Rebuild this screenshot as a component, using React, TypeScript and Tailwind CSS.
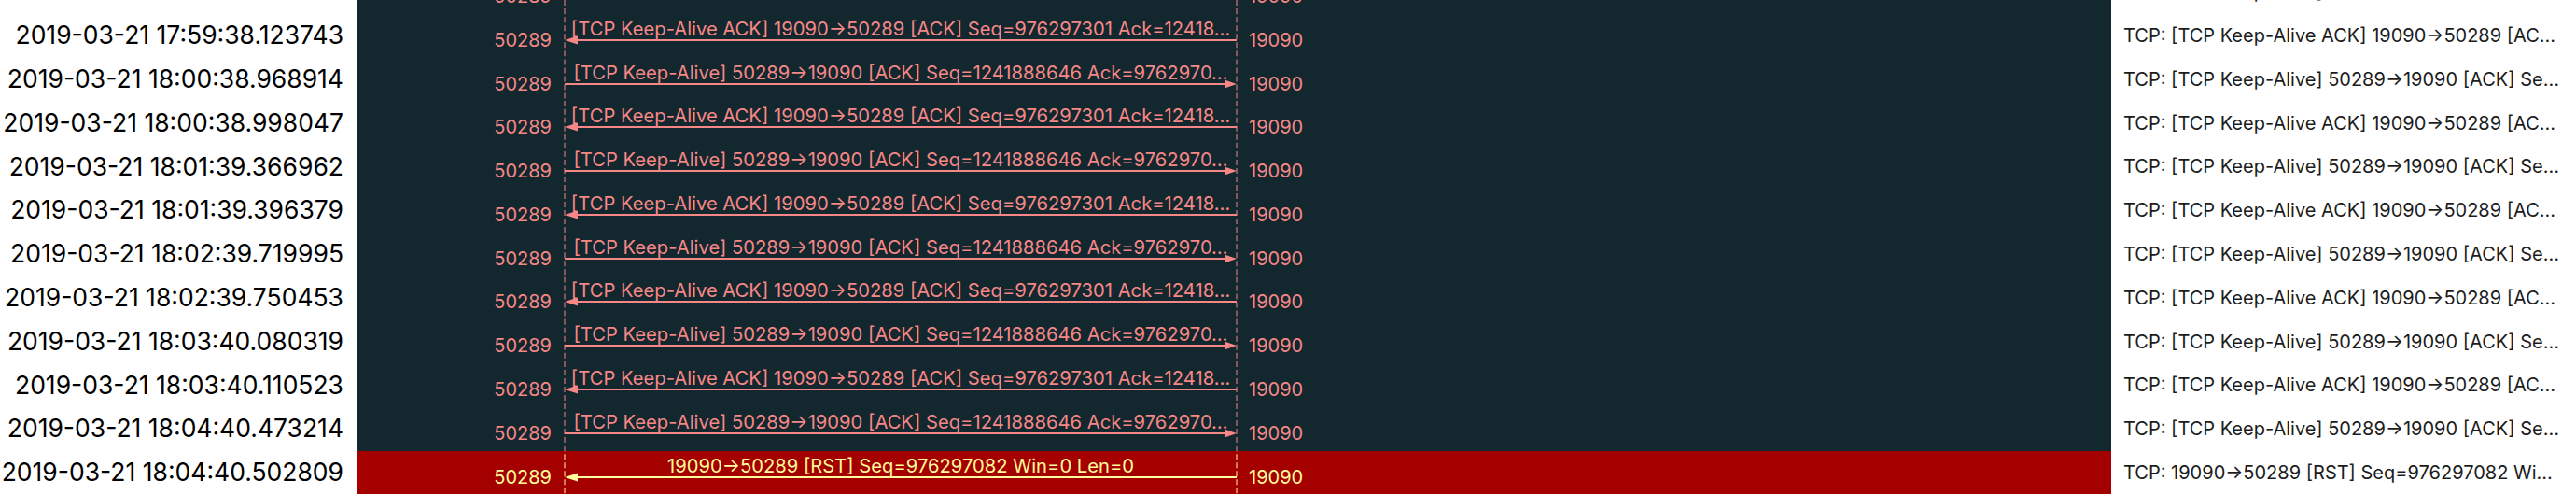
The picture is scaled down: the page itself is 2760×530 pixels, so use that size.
import React from "react";

type Kind = "ack" | "ka" | "rst";

const rows: { ts: string; kind: Kind }[] = [
  { ts: "", kind: "ka" },
  { ts: "2019-03-21 17:59:38.123743", kind: "ack" },
  { ts: "2019-03-21 18:00:38.968914", kind: "ka" },
  { ts: "2019-03-21 18:00:38.998047", kind: "ack" },
  { ts: "2019-03-21 18:01:39.366962", kind: "ka" },
  { ts: "2019-03-21 18:01:39.396379", kind: "ack" },
  { ts: "2019-03-21 18:02:39.719995", kind: "ka" },
  { ts: "2019-03-21 18:02:39.750453", kind: "ack" },
  { ts: "2019-03-21 18:03:40.080319", kind: "ka" },
  { ts: "2019-03-21 18:03:40.110523", kind: "ack" },
  { ts: "2019-03-21 18:04:40.473214", kind: "ka" },
  { ts: "2019-03-21 18:04:40.502809", kind: "rst" },
];

const label: Record<Kind, string> = {
  ack: "[TCP Keep-Alive ACK] 19090\u219250289 [ACK] Seq=976297301 Ack=12418\u2026",
  ka: "[TCP Keep-Alive] 50289\u219219090 [ACK] Seq=1241888646 Ack=9762970\u2026",
  rst: "19090\u219250289 [RST] Seq=976297082 Win=0 Len=0",
};

const info: Record<Kind, string> = {
  ack: "TCP: [TCP Keep-Alive ACK] 19090\u219250289 [AC\u2026",
  ka: "TCP: [TCP Keep-Alive] 50289\u219219090 [ACK] Se\u2026",
  rst: "TCP: 19090\u219250289 [RST] Seq=976297082 Wi\u2026",
};

const ROW_H = 46.8;
const TOP = -32.1;

function Lane({ kind, top }: { kind: Kind; top: number }) {
  const color = kind === "rst" ? "#fffc9c" : "#f78787";
  const phase = ((top % 9) + 9) % 9;
  const left = kind !== "ka";
  return (
    <div className="relative w-[722px] shrink-0 h-full">
      <svg className="absolute inset-0 h-full w-full overflow-hidden">
        <line x1="1" y1="0" x2="1" y2="48" stroke={color} strokeOpacity="0.5" strokeWidth="2" strokeDasharray="6 3" strokeDashoffset={phase} />
        <line x1="721" y1="0" x2="721" y2="48" stroke={color} strokeOpacity="0.5" strokeWidth="2" strokeDasharray="6 3" strokeDashoffset={phase} />
        {left ? (
          <>
            <line x1="12" y1="28" x2="721" y2="28" stroke={color} strokeWidth="2" />
            <polygon points="1,28 15,23.5 15,32.5" fill={color} />
          </>
        ) : (
          <>
            <line x1="1" y1="28" x2="710" y2="28" stroke={color} strokeWidth="2" />
            <polygon points="721,28 708,23.5 708,32.5" fill={color} />
          </>
        )}
      </svg>
      <div
        className={`relative pt-[4px] text-center whitespace-nowrap text-[20.2px] leading-[24px] ${
          kind === "rst" ? "text-[#fffc9c]" : "text-[#f78787]"
        }`}
      >
        {label[kind]}
      </div>
    </div>
  );
}

export default function App() {
  return (
    <div
      className="h-[530px] w-[2760px] overflow-hidden bg-white"
      style={{ fontFamily: "Inter, 'Noto Sans', sans-serif" }}
    >
      <div className="flex flex-col -mt-[32.1px]">
        {rows.map((r, i) => {
          const top = TOP + i * ROW_H;
          const red = r.kind === "rst";
          const fg = red ? "text-[#fffc9c]" : "text-[#f78787]";
          return (
            <div key={i} className="flex h-[46.8px] w-[2760px]">
              <div className="flex w-[382px] shrink-0 items-center justify-end bg-white pr-[14px] text-[26.5px] text-black whitespace-nowrap">
                {r.ts}
              </div>
              <div className={`flex w-[1880px] shrink-0 ${red ? "bg-[#a40000]" : "bg-[#12272e]"}`}>
                <div className={`w-[222px] shrink-0 pr-[13px] pt-[16px] text-right text-[20px] leading-[24px] ${fg}`}>
                  50289
                </div>
                <Lane kind={r.kind} top={top} />
                <div className={`pl-[12px] pt-[16px] text-[20px] leading-[24px] ${fg}`}>19090</div>
              </div>
              <div className="flex w-[498px] shrink-0 items-center bg-white pl-[13px] text-[20px] text-[#1c1c1c] whitespace-nowrap">
                {info[r.kind]}
              </div>
            </div>
          );
        })}
      </div>
    </div>
  );
}
